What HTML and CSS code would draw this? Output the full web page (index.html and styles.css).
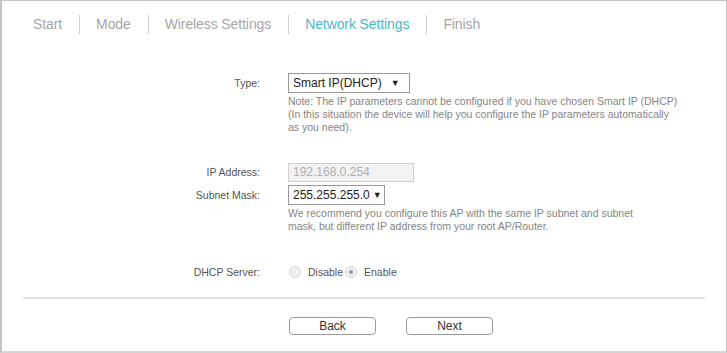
FILE: index.html
```html
<!DOCTYPE html>
<html>
<head>
<meta charset="utf-8">
<link rel="stylesheet" href="styles.css">
</head>
<body>
<div class="frame">
  <nav class="tabs">
    <span class="tab">Start</span>
    <span class="tab">Mode</span>
    <span class="tab">Wireless Settings</span>
    <span class="tab active">Network Settings</span>
    <span class="tab">Finish</span>
  </nav>

  <div class="form">
    <div class="row row-type">
      <div class="label">Type:</div>
      <div class="field">
        <div class="select sel-type">Smart IP(DHCP)<span class="arrow">&#9660;</span></div>
        <div class="note">Note: The IP parameters cannot be configured if you have chosen Smart IP (DHCP)<br>(In this situation the device will help you configure the IP parameters automatically<br>as you need).</div>
      </div>
    </div>

    <div class="row row-ip">
      <div class="label">IP Address:</div>
      <div class="field">
        <div class="input disabled">192.168.0.254</div>
      </div>
    </div>

    <div class="row row-mask">
      <div class="label">Subnet Mask:</div>
      <div class="field">
        <div class="select sel-mask">255.255.255.0<span class="arrow">&#9660;</span></div>
        <div class="note">We recommend you configure this AP with the same IP subnet and subnet<br>mask, but different IP address from your root AP/Router.</div>
      </div>
    </div>

    <div class="row row-dhcp">
      <div class="label">DHCP Server:</div>
      <div class="field radios">
        <span class="radio"></span><span class="rlabel">Disable</span>
        <span class="radio checked"></span><span class="rlabel">Enable</span>
      </div>
    </div>
  </div>

  <hr class="divider">

  <div class="buttons">
    <button class="btn">Back</button>
    <button class="btn">Next</button>
  </div>
</div>
</body>
</html>
```

FILE: styles.css
```css
html, body {
  margin: 0;
  padding: 0;
  background: #ffffff;
}
body {
  font-family: "Liberation Sans", Arial, sans-serif;
}
.frame {
  box-sizing: border-box;
  width: 727px;
  height: 353px;
  border: 1px solid #c4c4c4;
  border-left: 2px solid #c4c4c4;
  border-bottom: 2px solid #d4d4d4;
  position: relative;
}
.tabs {
  display: flex;
  align-items: center;
  padding: 14px 0 0 15px;
  height: 19px;
}
.tab {
  font-size: 14px;
  color: #a6a6a6;
  padding: 0 17px 0 16px;
  line-height: 19px;
  border-left: 1px solid #cfcfcf;
  letter-spacing: -0.1px;
}
.tab:first-child {
  border-left: none;
}
.tab.active {
  color: #4cb8c8;
}
.form {
  margin-top: 39px;
}
.row {
  display: flex;
  align-items: flex-start;
}
.label {
  width: 258px;
  text-align: right;
  font-size: 10.5px;
  color: #555;
  flex-shrink: 0;
  padding-right: 28px;
}
.field {
  font-size: 10.5px;
  color: #333;
}
.select {
  box-sizing: border-box;
  display: inline-flex;
  align-items: center;
  height: 20px;
  border: 1px solid #9a9a9a;
  background: #fff;
  font-size: 12px;
  color: #222;
  padding: 0 0 0 4px;
  white-space: pre;
}
.arrow {
  font-size: 9px;
  color: #222;
}
.sel-type { width: 122px; }
.sel-type .arrow { margin-left: 9px; }
.sel-mask { width: 97px; }
.sel-mask .arrow { margin-left: 3px; }
.row-type .label,
.row-mask .label {
  line-height: 20px;
}
.note {
  margin-top: 2px;
  line-height: 13px;
  color: #858585;
  font-size: 10.5px;
}
.row-ip {
  margin-top: 29px;
}
.row-ip .label {
  line-height: 19px;
}
.input {
  box-sizing: border-box;
  width: 126px;
  height: 19px;
  border: 1px solid #cfcfcf;
  background: #f2f2f2;
  color: #b0b0b0;
  font-size: 12px;
  line-height: 17px;
  padding-left: 4px;
}
.row-mask {
  margin-top: 3px;
}
.row-dhcp {
  margin-top: 32px;
  align-items: center;
}
.row-dhcp .label {
  line-height: 14px;
}
.radios {
  display: flex;
  align-items: center;
  color: #555;
}
.radio {
  box-sizing: border-box;
  width: 12px;
  height: 12px;
  border-radius: 50%;
  border: 1px solid #d8d8d8;
  background: #efefef;
  margin: 0 7px 0 1px;
  position: relative;
}
.radio.checked::after {
  content: "";
  position: absolute;
  left: 3px;
  top: 3px;
  width: 4px;
  height: 4px;
  border-radius: 50%;
  background: #9a9a9a;
}
.rlabel {
  margin-right: 1px;
  line-height: 14px;
}
.divider {
  margin: 18px 21px 0 21px;
  border: none;
  border-top: 2px solid #e2e2e2;
  height: 0;
}
.buttons {
  display: flex;
  padding-left: 287px;
  gap: 30px;
  margin-top: 18px;
}
.btn {
  box-sizing: border-box;
  width: 87px;
  height: 18px;
  border: 1px solid #9a9a9a;
  border-radius: 4px;
  background: #fff;
  font-family: "Liberation Sans", Arial, sans-serif;
  font-size: 12px;
  color: #333;
  padding: 0;
  line-height: 16px;
}
```
